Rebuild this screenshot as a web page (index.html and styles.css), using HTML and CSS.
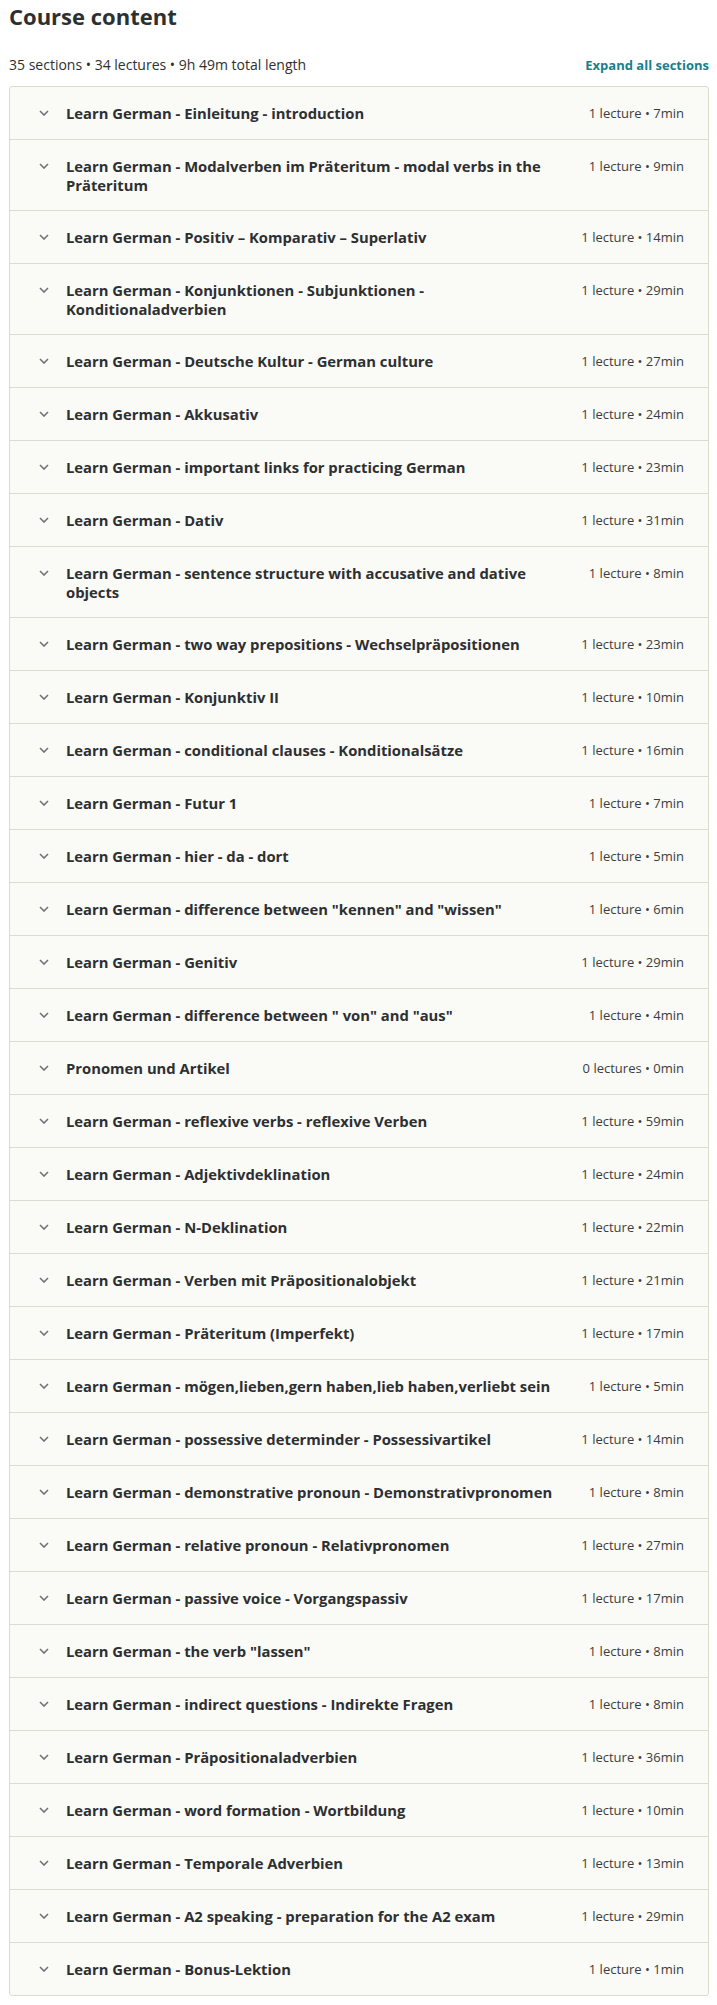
FILE: index.html
```html
<!DOCTYPE html>
<html lang="en">
<head>
	<meta charset="UTF-8">
	<title>Course content</title>
	<link rel="stylesheet" href="styles.css">
</head>
<body>
	<div id="curriculum">
		<h2 class="title">Course content</h2>
		<div class="stats">
			<span class="stats-text">35 sections • 34 lectures • 9h 49m total length</span>
			<a class="expand" href="#">Expand all sections</a>
		</div>
		<div class="sections">
			<div class="section"><span class="arrow"><svg width="10" height="6" viewBox="0 0 10 6"><path d="M1 1l4 4 4-4"/></svg></span><span class="name">Learn German - Einleitung - introduction</span><span class="info">1 lecture • 7min</span></div>
			<div class="section"><span class="arrow"><svg width="10" height="6" viewBox="0 0 10 6"><path d="M1 1l4 4 4-4"/></svg></span><span class="name">Learn German - Modalverben im Präteritum - modal verbs in the Präteritum</span><span class="info">1 lecture • 9min</span></div>
			<div class="section"><span class="arrow"><svg width="10" height="6" viewBox="0 0 10 6"><path d="M1 1l4 4 4-4"/></svg></span><span class="name">Learn German - Positiv – Komparativ – Superlativ</span><span class="info">1 lecture • 14min</span></div>
			<div class="section"><span class="arrow"><svg width="10" height="6" viewBox="0 0 10 6"><path d="M1 1l4 4 4-4"/></svg></span><span class="name">Learn German - Konjunktionen - Subjunktionen - Konditionaladverbien</span><span class="info">1 lecture • 29min</span></div>
			<div class="section"><span class="arrow"><svg width="10" height="6" viewBox="0 0 10 6"><path d="M1 1l4 4 4-4"/></svg></span><span class="name">Learn German - Deutsche Kultur - German culture</span><span class="info">1 lecture • 27min</span></div>
			<div class="section"><span class="arrow"><svg width="10" height="6" viewBox="0 0 10 6"><path d="M1 1l4 4 4-4"/></svg></span><span class="name">Learn German - Akkusativ</span><span class="info">1 lecture • 24min</span></div>
			<div class="section"><span class="arrow"><svg width="10" height="6" viewBox="0 0 10 6"><path d="M1 1l4 4 4-4"/></svg></span><span class="name">Learn German - important links for practicing German</span><span class="info">1 lecture • 23min</span></div>
			<div class="section"><span class="arrow"><svg width="10" height="6" viewBox="0 0 10 6"><path d="M1 1l4 4 4-4"/></svg></span><span class="name">Learn German - Dativ</span><span class="info">1 lecture • 31min</span></div>
			<div class="section"><span class="arrow"><svg width="10" height="6" viewBox="0 0 10 6"><path d="M1 1l4 4 4-4"/></svg></span><span class="name">Learn German - sentence structure with accusative and dative objects</span><span class="info">1 lecture • 8min</span></div>
			<div class="section"><span class="arrow"><svg width="10" height="6" viewBox="0 0 10 6"><path d="M1 1l4 4 4-4"/></svg></span><span class="name">Learn German - two way prepositions - Wechselpräpositionen</span><span class="info">1 lecture • 23min</span></div>
			<div class="section"><span class="arrow"><svg width="10" height="6" viewBox="0 0 10 6"><path d="M1 1l4 4 4-4"/></svg></span><span class="name">Learn German - Konjunktiv II</span><span class="info">1 lecture • 10min</span></div>
			<div class="section"><span class="arrow"><svg width="10" height="6" viewBox="0 0 10 6"><path d="M1 1l4 4 4-4"/></svg></span><span class="name">Learn German - conditional clauses - Konditionalsätze</span><span class="info">1 lecture • 16min</span></div>
			<div class="section"><span class="arrow"><svg width="10" height="6" viewBox="0 0 10 6"><path d="M1 1l4 4 4-4"/></svg></span><span class="name">Learn German - Futur 1</span><span class="info">1 lecture • 7min</span></div>
			<div class="section"><span class="arrow"><svg width="10" height="6" viewBox="0 0 10 6"><path d="M1 1l4 4 4-4"/></svg></span><span class="name">Learn German - hier - da - dort</span><span class="info">1 lecture • 5min</span></div>
			<div class="section"><span class="arrow"><svg width="10" height="6" viewBox="0 0 10 6"><path d="M1 1l4 4 4-4"/></svg></span><span class="name">Learn German - difference between "kennen" and "wissen"</span><span class="info">1 lecture • 6min</span></div>
			<div class="section"><span class="arrow"><svg width="10" height="6" viewBox="0 0 10 6"><path d="M1 1l4 4 4-4"/></svg></span><span class="name">Learn German - Genitiv</span><span class="info">1 lecture • 29min</span></div>
			<div class="section"><span class="arrow"><svg width="10" height="6" viewBox="0 0 10 6"><path d="M1 1l4 4 4-4"/></svg></span><span class="name">Learn German - difference between " von" and "aus"</span><span class="info">1 lecture • 4min</span></div>
			<div class="section"><span class="arrow"><svg width="10" height="6" viewBox="0 0 10 6"><path d="M1 1l4 4 4-4"/></svg></span><span class="name">Pronomen und Artikel</span><span class="info">0 lectures • 0min</span></div>
			<div class="section"><span class="arrow"><svg width="10" height="6" viewBox="0 0 10 6"><path d="M1 1l4 4 4-4"/></svg></span><span class="name">Learn German - reflexive verbs - reflexive Verben</span><span class="info">1 lecture • 59min</span></div>
			<div class="section"><span class="arrow"><svg width="10" height="6" viewBox="0 0 10 6"><path d="M1 1l4 4 4-4"/></svg></span><span class="name">Learn German - Adjektivdeklination</span><span class="info">1 lecture • 24min</span></div>
			<div class="section"><span class="arrow"><svg width="10" height="6" viewBox="0 0 10 6"><path d="M1 1l4 4 4-4"/></svg></span><span class="name">Learn German - N-Deklination</span><span class="info">1 lecture • 22min</span></div>
			<div class="section"><span class="arrow"><svg width="10" height="6" viewBox="0 0 10 6"><path d="M1 1l4 4 4-4"/></svg></span><span class="name">Learn German - Verben mit Präpositionalobjekt</span><span class="info">1 lecture • 21min</span></div>
			<div class="section"><span class="arrow"><svg width="10" height="6" viewBox="0 0 10 6"><path d="M1 1l4 4 4-4"/></svg></span><span class="name">Learn German - Präteritum (Imperfekt)</span><span class="info">1 lecture • 17min</span></div>
			<div class="section"><span class="arrow"><svg width="10" height="6" viewBox="0 0 10 6"><path d="M1 1l4 4 4-4"/></svg></span><span class="name">Learn German - mögen,lieben,gern haben,lieb haben,verliebt sein</span><span class="info">1 lecture • 5min</span></div>
			<div class="section"><span class="arrow"><svg width="10" height="6" viewBox="0 0 10 6"><path d="M1 1l4 4 4-4"/></svg></span><span class="name">Learn German - possessive determinder - Possessivartikel</span><span class="info">1 lecture • 14min</span></div>
			<div class="section"><span class="arrow"><svg width="10" height="6" viewBox="0 0 10 6"><path d="M1 1l4 4 4-4"/></svg></span><span class="name">Learn German - demonstrative pronoun - Demonstrativpronomen</span><span class="info">1 lecture • 8min</span></div>
			<div class="section"><span class="arrow"><svg width="10" height="6" viewBox="0 0 10 6"><path d="M1 1l4 4 4-4"/></svg></span><span class="name">Learn German - relative pronoun - Relativpronomen</span><span class="info">1 lecture • 27min</span></div>
			<div class="section"><span class="arrow"><svg width="10" height="6" viewBox="0 0 10 6"><path d="M1 1l4 4 4-4"/></svg></span><span class="name">Learn German - passive voice - Vorgangspassiv</span><span class="info">1 lecture • 17min</span></div>
			<div class="section"><span class="arrow"><svg width="10" height="6" viewBox="0 0 10 6"><path d="M1 1l4 4 4-4"/></svg></span><span class="name">Learn German - the verb "lassen"</span><span class="info">1 lecture • 8min</span></div>
			<div class="section"><span class="arrow"><svg width="10" height="6" viewBox="0 0 10 6"><path d="M1 1l4 4 4-4"/></svg></span><span class="name">Learn German - indirect questions - Indirekte Fragen</span><span class="info">1 lecture • 8min</span></div>
			<div class="section"><span class="arrow"><svg width="10" height="6" viewBox="0 0 10 6"><path d="M1 1l4 4 4-4"/></svg></span><span class="name">Learn German - Präpositionaladverbien</span><span class="info">1 lecture • 36min</span></div>
			<div class="section"><span class="arrow"><svg width="10" height="6" viewBox="0 0 10 6"><path d="M1 1l4 4 4-4"/></svg></span><span class="name">Learn German - word formation - Wortbildung</span><span class="info">1 lecture • 10min</span></div>
			<div class="section"><span class="arrow"><svg width="10" height="6" viewBox="0 0 10 6"><path d="M1 1l4 4 4-4"/></svg></span><span class="name">Learn German - Temporale Adverbien</span><span class="info">1 lecture • 13min</span></div>
			<div class="section"><span class="arrow"><svg width="10" height="6" viewBox="0 0 10 6"><path d="M1 1l4 4 4-4"/></svg></span><span class="name">Learn German - A2 speaking - preparation for the A2 exam</span><span class="info">1 lecture • 29min</span></div>
			<div class="section"><span class="arrow"><svg width="10" height="6" viewBox="0 0 10 6"><path d="M1 1l4 4 4-4"/></svg></span><span class="name">Learn German - Bonus-Lektion</span><span class="info">1 lecture • 1min</span></div>
		</div>
	</div>
</body>
</html>
```

FILE: styles.css
```css
*{
	margin: 0;
	padding: 0;
	box-sizing: border-box;
}
body{
	font-family: "Open Sans", "Liberation Sans", sans-serif;
	color: #2d2f31;
	background: #fff;
}
#curriculum{
	padding: 3px 8px 12px 9px;
}
.title{
	font-size: 22px;
	line-height: 26px;
	font-weight: 700;
	margin-bottom: 26px;
}
.stats{
	display: flex;
	justify-content: space-between;
	align-items: baseline;
	line-height: 20px;
	margin-bottom: 11px;
}
.stats-text{
	font-size: 14px;
}
.expand{
	font-size: 13px;
	font-weight: 700;
	color: #17808c;
	text-decoration: none;
}
.sections{
	border: 1px solid #dcdbcd;
	border-radius: 3px;
	background: #fafaf7;
}
.section{
	display: flex;
	align-items: flex-start;
	padding: 16px 24px;
	border-top: 1px solid #dcdbcd;
}
.section:first-child{
	border-top: none;
}
.arrow{
	width: 20px;
	height: 20px;
	flex-shrink: 0;
	display: flex;
	align-items: center;
	justify-content: center;
	margin-right: 12px;
}
.arrow svg{
	display: block;
}
.arrow path{
	fill: none;
	stroke: #707275;
	stroke-width: 1.6;
}
.name{
	flex: 1;
	font-size: 14.8px;
	line-height: 18.5px;
	font-weight: 700;
	padding-top: 1px;
	margin-right: 16px;
}
.info{
	flex-shrink: 0;
	font-size: 13px;
	line-height: 20px;
	white-space: nowrap;
	color: #3b3e41;
}
```
